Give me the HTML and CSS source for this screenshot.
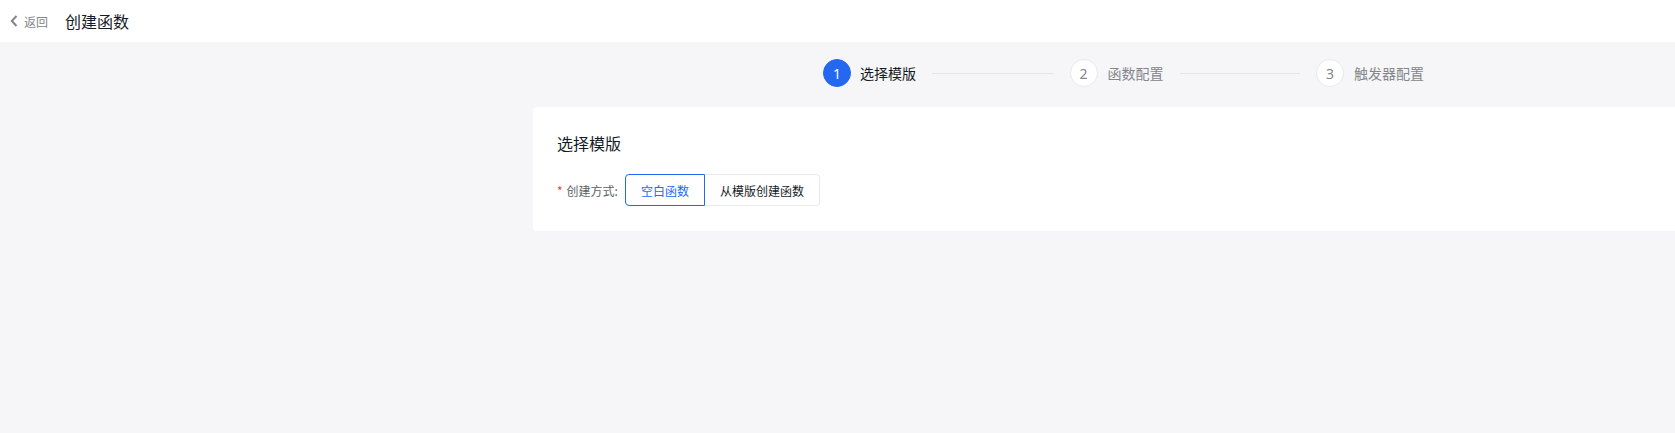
FILE: index.html
```html
<!DOCTYPE html>
<html lang="zh">
<head>
<meta charset="utf-8">
<title>创建函数</title>
<link rel="stylesheet" href="styles.css">
</head>
<body>
<header class="topbar">
  <a class="back">
    <svg class="back-icon" width="8" height="12" viewBox="0 0 8 12"><path d="M6.5 1 L1.8 6 L6.5 11" fill="none" stroke="#84868c" stroke-width="2"/></svg>
    <span>返回</span>
  </a>
  <h1 class="title">创建函数</h1>
</header>
<main class="main">
  <div class="content">
    <div class="steps">
      <div class="step active">
        <span class="step-num">1</span>
        <span class="step-text">选择模版</span>
        <span class="step-line"></span>
      </div>
      <div class="step">
        <span class="step-num">2</span>
        <span class="step-text">函数配置</span>
        <span class="step-line"></span>
      </div>
      <div class="step last">
        <span class="step-num">3</span>
        <span class="step-text">触发器配置</span>
      </div>
    </div>
    <section class="card">
      <h2 class="card-title">选择模版</h2>
      <div class="form-row">
        <label class="form-label"><span class="req">*</span>创建方式:</label>
        <div class="radio-group">
          <button class="radio-btn selected">空白函数</button>
          <button class="radio-btn">从模版创建函数</button>
        </div>
      </div>
    </section>
  </div>
</main>
</body>
</html>
```
FILE: styles.css
```css
* { box-sizing: border-box; }
html, body { margin: 0; padding: 0; }
body {
  font-family: "Noto Sans CJK SC", "Noto Sans", sans-serif;
  background: #f6f6f8;
  color: #151b26;
  width: 1675px;
  height: 433px;
  overflow: hidden;
}
.topbar {
  height: 42px;
  background: #fff;
  display: flex;
  align-items: center;
  padding-left: 10px;
}
.back {
  display: flex;
  align-items: center;
  color: #84868c;
  font-size: 12px;
  gap: 6px;
}
.back-icon { display: block; }
.title {
  margin: 0 0 0 17px;
  font-size: 16px;
  font-weight: 400;
  color: #151b26;
  line-height: 24px;
}
.main {
  padding-left: 533px;
}
.steps {
  display: flex;
  padding: 17px 0 20px 290px;
}
.step {
  display: flex;
  align-items: center;
  width: 246.5px;
  height: 28px;
}
.step.last { width: auto; }
.step-num {
  width: 28px;
  height: 28px;
  border-radius: 50%;
  border: 1px solid #e8e9eb;
  background: #fff;
  color: #84868c;
  font-size: 14px;
  display: flex;
  align-items: center;
  justify-content: center;
  flex: none;
  font-family: "Noto Sans", sans-serif;
}
.step.active .step-num {
  background: #2468f2;
  border-color: #2468f2;
  color: #fff;
}
.step-text {
  margin-left: 10px;
  font-size: 14px;
  color: #84868c;
  white-space: nowrap;
}
.step.active .step-text { color: #151b26; margin-left: 9px; }
.step-line {
  flex: 1;
  height: 1px;
  background: #e4e5e8;
  margin: 0 16px;
}
.card {
  background: #fff;
  border-radius: 4px 0 0 4px;
  height: 124px;
  padding: 23px 24px 0 24px;
}
.card-title {
  margin: 0;
  font-size: 16px;
  font-weight: 400;
  line-height: 26px;
}
.form-row {
  display: flex;
  align-items: center;
  margin-top: 18px;
}
.form-label {
  font-size: 12px;
  color: #5c5f66;
  margin-right: 7px;
  display: flex;
  align-items: center;
}
.req {
  color: #f33e3e;
  margin-right: 4px;
  font-size: 12px;
}
.radio-group { display: flex; }
.radio-btn {
  font-family: inherit;
  font-size: 12px;
  height: 32px;
  padding: 0 15px;
  background: #fff;
  border: 1px solid #e8e9eb;
  color: #151b26;
  margin: 0;
  cursor: pointer;
}
.radio-btn:first-child { border-radius: 4px 0 0 4px; }
.radio-btn:last-child { border-radius: 0 4px 4px 0; border-left: none; }
.radio-btn.selected {
  border-color: #2468f2;
  color: #2468f2;
}
```
